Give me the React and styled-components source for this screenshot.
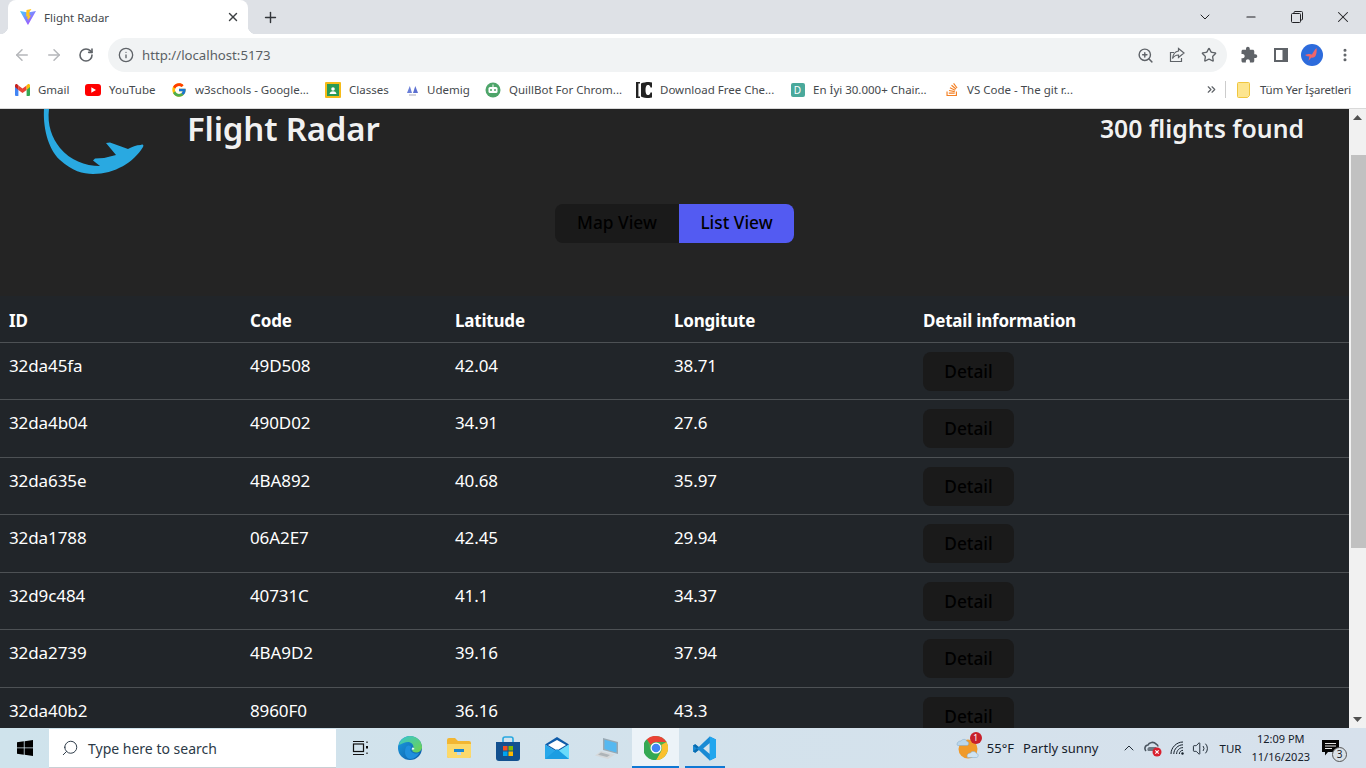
import React from "react";
import styled, { createGlobalStyle } from "styled-components";
import {
  ArrowLeft,
  ArrowRight,
  RotateCw,
  Info,
  ZoomIn,
  Star,
  X,
  Plus,
  Minus,
  ChevronDown,
  ChevronUp,
  ChevronsRight,
  EllipsisVertical,
  Search,
  Volume2,
} from "lucide-react";
import { FcGoogle } from "react-icons/fc";
import { FaStackOverflow } from "react-icons/fa";

const GlobalStyle = createGlobalStyle`
  html, body {
    margin: 0;
    padding: 0;
    height: 100%;
    overflow: hidden;
    font-family: "Noto Sans", "Open Sans", sans-serif;
  }
  * { box-sizing: border-box; }
`;

const flights = [
  ["32da45fa", "49D508", "42.04", "38.71"],
  ["32da4b04", "490D02", "34.91", "27.6"],
  ["32da635e", "4BA892", "40.68", "35.97"],
  ["32da1788", "06A2E7", "42.45", "29.94"],
  ["32d9c484", "40731C", "41.1", "34.37"],
  ["32da2739", "4BA9D2", "39.16", "37.94"],
  ["32da40b2", "8960F0", "36.16", "43.3"],
];

const Screen = styled.div`
  width: 1366px;
  height: 768px;
  display: flex;
  flex-direction: column;
  overflow: hidden;
  background: #242424;
`;

/* browser chrome */
const TabStrip = styled.div`
  height: 34px;
  flex: none;
  display: flex;
  align-items: stretch;
  background: #dee1e6;
  color: #3c4043;
`;

const Tab = styled.div`
  position: relative;
  margin-left: 8px;
  width: 240px;
  padding: 0 8px 0 12px;
  display: flex;
  align-items: center;
  gap: 8px;
  background: #fff;
  border-radius: 8px 8px 0 0;
  &::before,
  &::after {
    content: "";
    position: absolute;
    bottom: 0;
    width: 8px;
    height: 8px;
  }
  &::before {
    left: -8px;
    background: radial-gradient(circle at 0 0, transparent 8px, #fff 8.5px);
  }
  &::after {
    right: -8px;
    background: radial-gradient(circle at 100% 0, transparent 8px, #fff 8.5px);
  }
`;

const TabTitle = styled.span`
  flex: 1;
  font-size: 11.5px;
  color: #45494d;
`;

const NewTab = styled.div`
  width: 28px;
  margin-left: 8px;
  display: flex;
  align-items: center;
  justify-content: center;
  color: #33363a;
`;

const WindowControls = styled.div`
  margin-left: auto;
  display: flex;
`;

const WindowButton = styled.div`
  width: 46px;
  display: flex;
  align-items: center;
  justify-content: center;
  color: #202124;
`;

const Toolbar = styled.div`
  height: 38px;
  flex: none;
  display: flex;
  align-items: center;
  padding: 4px 5px 0 6px;
  background: #fff;
`;

const ToolButton = styled.div`
  width: 32px;
  height: 32px;
  flex: none;
  display: flex;
  align-items: center;
  justify-content: center;
  color: ${(p) => p.$color || "#5f6368"};
`;

const Omnibox = styled.div`
  flex: 1;
  height: 34px;
  margin: 0 6px;
  padding: 0 2px 0 10px;
  display: flex;
  align-items: center;
  gap: 8px;
  border-radius: 17px;
  background: #f1f3f4;
  color: #5f6368;
`;

const Url = styled.span`
  flex: 1;
  font-size: 13.2px;
  color: #5a5f64;
`;

const OmniIcons = styled.div`
  display: flex;
`;

const Avatar = styled.div`
  width: 22px;
  height: 22px;
  margin-right: 2px;
  border-radius: 50%;
  background: #2d6bdc;
  display: flex;
  align-items: center;
  justify-content: center;
`;

const BookmarkBar = styled.div`
  height: 37px;
  flex: none;
  display: flex;
  align-items: center;
  padding: 0 15px 1px 14px;
  background: #fff;
  font-size: 11.5px;
  color: #45494d;
  border-bottom: 1px solid #d9d9d9;
`;

const Bookmark = styled.div`
  display: flex;
  align-items: center;
  gap: 8px;
  margin-right: 16px;
`;

const BookmarkIcon = styled.div`
  width: ${(p) => p.$w || 16}px;
  height: 16px;
  flex: none;
  display: flex;
  align-items: center;
  justify-content: center;
`;

const BookmarkLabel = styled.span`
  width: ${(p) => p.$w}px;
  white-space: nowrap;
`;

const TealBadge = styled.div`
  width: 14px;
  height: 14px;
  border-radius: 2px;
  background: #4aa99b;
  color: #fff;
  font-size: 10px;
  line-height: 14px;
  text-align: center;
`;

const BookmarkEnd = styled.div`
  margin-left: auto;
  display: flex;
  align-items: center;
  color: #5f6368;
`;

const BarDivider = styled.div`
  width: 1px;
  height: 17px;
  margin: 0 11px 0 7px;
  background: #ccc;
`;

const OtherBookmarks = styled.span`
  margin-left: 10px;
  color: #45494d;
  letter-spacing: -0.22px;
  white-space: nowrap;
`;

/* page */
const Viewport = styled.div`
  flex: 1;
  min-height: 0;
  display: flex;
`;

const Page = styled.main`
  flex: 1;
  min-width: 0;
  background: #242424;
  color: rgba(255, 255, 255, 0.95);
`;

const Header = styled.header`
  height: 95px;
  padding: 0 45px 0 40px;
  display: flex;
  align-items: flex-start;
`;

const Logo = styled.svg`
  width: 110px;
  height: 70px;
  flex: none;
`;

const Title = styled.h1`
  margin: 0 0 0 37px;
  font-size: 33px;
  line-height: 40px;
  font-weight: 600;
  letter-spacing: -0.2px;
`;

const Count = styled.h2`
  margin: 0 0 0 auto;
  font-size: 24.8px;
  line-height: 39px;
  font-weight: 600;
`;

const Toggle = styled.div`
  display: flex;
  justify-content: center;
`;

const ToggleButton = styled.button`
  height: 39px;
  width: ${(p) => p.$w}px;
  border: 0;
  padding: 0 0 2px;
  font: inherit;
  font-size: 17.3px;
  font-weight: 500;
  color: #000;
  background: ${(p) => (p.$active ? "#535bf2" : "#1a1a1a")};
  border-radius: ${(p) => (p.$active ? "0 8px 8px 0" : "8px 0 0 8px")};
`;

const FlightTable = styled.table`
  width: 100%;
  margin-top: 53px;
  table-layout: fixed;
  border-collapse: collapse;
  background: #212529;
  color: #fff;
  font-size: 17px;
  letter-spacing: -0.1px;
`;

const Th = styled.th`
  width: ${(p) => p.$w || "auto"};
  height: 46px;
  padding: 10px 8px 6px;
  text-align: left;
  font-weight: 700;
  line-height: 27px;
  letter-spacing: -0.2px;
  border-bottom: 1px solid #4d5154;
  &:first-child {
    padding-left: 9px;
  }
`;

const Td = styled.td`
  height: 57.5px;
  padding: 9px 8px 7px;
  vertical-align: top;
  line-height: 27px;
  border-bottom: 1px solid #4d5154;
  &:first-child {
    padding-left: 9px;
  }
`;

const DetailButton = styled.button`
  display: block;
  width: 91px;
  height: 39px;
  border: 0;
  border-radius: 8px;
  padding: 0;
  font: inherit;
  font-size: 17.3px;
  font-weight: 500;
  letter-spacing: 0;
  color: #000;
  background: #1a1a1a;
`;

const Scrollbar = styled.div`
  width: 17px;
  flex: none;
  display: flex;
  flex-direction: column;
  background: #f1f1f1;
`;

const ScrollArrow = styled.div`
  height: 17px;
  flex: none;
  display: flex;
  align-items: center;
  justify-content: center;
`;

const ScrollTrack = styled.div`
  flex: 1;
  padding-top: 29px;
`;

const ScrollThumb = styled.div`
  height: 393px;
  margin-left: 2px;
  background: #c1c1c1;
`;

/* taskbar */
const Taskbar = styled.footer`
  position: relative;
  z-index: 1;
  height: 40px;
  flex: none;
  display: flex;
  align-items: stretch;
  background: linear-gradient(90deg, #cfe3ec, #d3e2ec 50%, #d7e1ec);
  color: #15202b;
`;

const StartButton = styled.div`
  width: 49px;
  flex: none;
  display: flex;
  align-items: center;
  justify-content: center;
`;

const SearchBox = styled.div`
  width: 287px;
  flex: none;
  margin-top: 1px;
  padding-left: 12px;
  display: flex;
  align-items: center;
  gap: 9px;
  background: #fff;
  border-bottom: 1px solid #c9cfd4;
  font-size: 14px;
  color: #2c3a47;
`;

const SearchGlyph = styled(Search)`
  transform: scaleX(-1);
`;

const TaskSlot = styled.div`
  position: relative;
  width: 49.2px;
  flex: none;
  display: flex;
  align-items: center;
  justify-content: center;
  &::before {
    content: ${(p) => (p.$open ? '""' : "none")};
    position: absolute;
    top: 0;
    bottom: 0;
    left: ${(p) => p.$inset || 0}px;
    right: ${(p) => p.$inset || 0}px;
    background: ${(p) => (p.$active ? "#ecf3f8" : "transparent")};
    border-bottom: 2px solid #0f78d4;
  }
  & > svg {
    position: relative;
  }
`;

const Tray = styled.div`
  margin-left: auto;
  padding-right: 21px;
  display: flex;
  align-items: center;
  font-size: 13px;
`;

const Weather = styled.div`
  margin: 0 18px 0 8px;
  display: flex;
  gap: 9px;
  white-space: nowrap;
`;

const TrayIcon = styled.div`
  width: 24px;
  flex: none;
  display: flex;
  align-items: center;
  justify-content: center;
`;

const Lang = styled.span`
  margin: 0 10px 0 7px;
  font-size: 11.5px;
`;

const Clock = styled.div`
  margin-right: 12px;
  text-align: center;
  font-size: 11px;
  line-height: 18px;
`;

const NoteBubble = styled.div`
  position: relative;
  width: 23px;
  display: flex;
`;

const NoteCount = styled.span`
  position: absolute;
  right: -2px;
  bottom: -6px;
  width: 15px;
  height: 15px;
  border-radius: 50%;
  background: #d9e0e6;
  border: 1px solid #555;
  font-size: 10px;
  line-height: 13px;
  text-align: center;
`;

const WeatherBadge = styled.span`
  position: absolute;
  top: -4px;
  right: -3px;
  width: 12px;
  height: 12px;
  border-radius: 50%;
  background: #c8202b;
  color: #fff;
  font-size: 8.5px;
  line-height: 12px;
  text-align: center;
`;

const WeatherIconWrap = styled.div`
  position: relative;
  width: 23px;
  height: 24px;
  flex: none;
`;

/* drawings */
const ViteIcon = () => (
  <svg width="16" height="16" viewBox="0 0 16 16">
    <defs>
      <linearGradient id="viteA" x1="0" y1="0" x2="1" y2="1">
        <stop offset="0" stopColor="#41d1ff" />
        <stop offset="1" stopColor="#bd34fe" />
      </linearGradient>
    </defs>
    <path d="M0 2l8 1.5L16 2 8.3 15.6a.4.4 0 0 1-.7 0z" fill="url(#viteA)" />
    <path d="M11.4 0 6.5 1l-.4 6.5 1.5-.3-.5 2.7 1.3-.4-.5 2.6 3-5.6-1.6.3.6-2.7-1.4.3z" fill="#ffc61f" />
  </svg>
);

const GmailIcon = () => (
  <svg width="15" height="12" viewBox="0 0 15 12">
    <path d="M0 2v9a1 1 0 0 0 1 1h2.4V5.2z" fill="#4285f4" />
    <path d="M15 2v9a1 1 0 0 1-1 1h-2.400V5.200z" fill="#34a853" />
    <path d="M3.400 6V1.500L7.500 4.600l4.100-3.100V6L7.500 9z" fill="#ea4335" />
    <path d="M0 3V1.500C0 .3 1.400-.4 2.400.4l1 .8V6z" fill="#c5221f" />
    <path d="M15 3V1.500c0-1.200-1.400-1.900-2.400-1.100l-1 .8V6z" fill="#fbbc04" />
  </svg>
);

const YouTubeIcon = () => (
  <svg width="16" height="12" viewBox="0 0 16 12">
    <rect width="16" height="12" rx="3" fill="#f00" />
    <path d="M6.300 3.300v5.400L11 6z" fill="#fff" />
  </svg>
);

const ClassroomIcon = () => (
  <svg width="16" height="16" viewBox="0 0 16 16">
    <rect width="16" height="16" rx="1" fill="#f6bb18" />
    <rect x="2" y="2" width="12" height="12" fill="#2a9a54" />
    <circle cx="8" cy="7" r="1.800" fill="#fff" />
    <path d="M4.500 12c.4-2 1.800-2.700 3.500-2.700s3.100.7 3.500 2.700z" fill="#fff" />
  </svg>
);

const UdemigIcon = () => (
  <svg width="13" height="13" viewBox="0 0 13 13">
    <path d="M1 10 3.800 3 6 10z" fill="#6a7fd8" />
    <path d="M7 10 9.300 3 12 10z" fill="#5b6fd0" />
    <rect x="3" y="11.500" width="7" height="1" fill="#aab" />
  </svg>
);

const QuillbotIcon = () => (
  <svg width="16" height="16" viewBox="0 0 16 16">
    <circle cx="8" cy="8" r="7.500" fill="#4ea56a" />
    <rect x="3.500" y="5" width="9" height="6" rx="1.500" fill="#fff" />
    <circle cx="6" cy="8" r="1" fill="#4ea56a" />
    <circle cx="10" cy="8" r="1" fill="#4ea56a" />
    <rect x="7.500" y="2.500" width="1" height="2.500" fill="#fff" />
  </svg>
);

const BracketIcon = () => (
  <svg width="16" height="16" viewBox="0 0 16 16">
    <path d="M0 0h4v1.500H2.400v13H4V16H0z" fill="#222" />
    <path d="M5 1.500C7 .5 10 0 13 0l3 .5v5h-1.500C14 3 12.500 2.800 11.500 3c-1.500.4-2 2.500-2 5s.5 4.600 2 5c1 .2 2.500 0 3-2.500H16v5L13 16c-3 0-6-.5-8-1.500z" fill="#222" />
  </svg>
);

const FolderBookmark = () => (
  <svg width="13" height="16" viewBox="0 0 13 16">
    <path d="M1.500.5h10a1 1 0 0 1 1 1v12l-2 2h-9a1 1 0 0 1-1-1v-13a1 1 0 0 1 1-1z" fill="#fde58f" stroke="#f0c63f" />
  </svg>
);

const RestoreIcon = () => (
  <svg width="12" height="12" viewBox="0 0 12 12" fill="none" stroke="#202124">
    <rect x=".5" y="2.500" width="9" height="9" rx="1" />
    <path d="M3 2.500V1.500a1 1 0 0 1 1-1h6.500a1 1 0 0 1 1 1V8a1 1 0 0 1-1 1h-1" />
  </svg>
);

const ShareIcon = () => (
  <svg width="16" height="16" viewBox="0 0 16 16" fill="none" stroke="#5f6368" strokeWidth="1.200">
    <path d="M5 5.500H1.500v9h11V11" />
    <path d="M9.500 1.500 15 6l-5.500 4.500V8C7 8 5 9 3.500 11.500 4 7.500 6 4.500 9.500 4z" />
  </svg>
);

const ExtensionIcon = () => (
  <svg width="18" height="18" viewBox="0 0 24 24" fill="#5f6368">
    <path d="M20.500 11H19V7c0-1.100-.9-2-2-2h-4V3.500C13 2.120 11.880 1 10.500 1S8 2.120 8 3.500V5H4c-1.100 0-1.990.9-1.990 2v3.800H3.500c1.490 0 2.700 1.210 2.700 2.700s-1.210 2.700-2.700 2.700H2V20c0 1.100.9 2 2 2h3.800v-1.500c0-1.490 1.210-2.700 2.700-2.700 1.490 0 2.700 1.210 2.700 2.700V22H17c1.100 0 2-.9 2-2v-4h1.500c1.380 0 2.500-1.120 2.500-2.500S21.880 11 20.500 11z" />
  </svg>
);

const SidePanelIcon = () => (
  <svg width="14" height="14" viewBox="0 0 14 14">
    <path d="M0 0h14v14H0z" fill="#5f6368" />
    <path d="M2 2h6.500v10H2z" fill="#fff" />
  </svg>
);

const ButterflyIcon = () => (
  <svg width="16" height="16" viewBox="0 0 16 16">
    <path d="M1 8c3-1 5-1.500 7-.5C9 5 11 2.500 12.500 1 13 4 12.500 7 11.500 9c-1 1.500-3 2-4 1.500C6 12 5 13 4.500 14 5 12 5 10.500 5.500 9.500 4 9.500 2.500 9 1 8z" fill="#f0656a" />
  </svg>
);

const WindowsLogo = () => (
  <svg width="16" height="16" viewBox="0 0 16 16" fill="#000">
    <path d="M0 2.300 6.800 1.300V7.500H0zM7.600 1.200 16 0V7.500H7.600zM0 8.300H6.800V14.700L0 13.700zM7.600 8.300H16V16L7.600 14.800z" />
  </svg>
);

const TaskViewIcon = () => (
  <svg width="17" height="16" viewBox="0 0 17 16" fill="none" stroke="#111" strokeWidth="1.200">
    <rect x="1.500" y="4" width="10" height="7.500" />
    <path d="M1 1.500h11M1 14.500h11" />
    <path d="M15 1.500v1.500M15 12.500v1.500" />
    <rect x="14" y="6" width="2" height="2.500" fill="#111" stroke="none" />
  </svg>
);

const EdgeIcon = () => (
  <svg width="24" height="24" viewBox="0 0 24 24">
    <defs>
      <linearGradient id="edgeA" x1="0" y1="0" x2="1" y2="1">
        <stop offset="0" stopColor="#37c6d0" />
        <stop offset="1" stopColor="#70d34a" />
      </linearGradient>
      <linearGradient id="edgeB" x1="0" y1="0" x2="1" y2="1">
        <stop offset="0" stopColor="#1b9de2" />
        <stop offset="1" stopColor="#0c59a4" />
      </linearGradient>
    </defs>
    <circle cx="12" cy="12" r="12" fill="url(#edgeB)" />
    <path d="M1 9C2 3.500 7 0 12 0c7 0 12 5.500 12 11 0 3.500-3 5.500-6 5.500-2 0-4-1-3.800-2.500.4-.6 1.300-1.200 1.300-3 0-2.500-2.500-5-5.500-5S4 7.500 1 9z" fill="url(#edgeA)" />
    <path d="M8 11c1-1.500 3-2 4.500-1 1 1 .5 2-.2 3-.5 2 2 4.500 5.700 4.500 1.300 0 2.800-.3 3.300-.7C20 20 16.500 23 12.500 23 8 23 5.500 17 8 11z" fill="#1f8fdc" />
    <path d="M14.500 11.500c.4 0 1.500.4 2 1.500-1.200 1-2.500.8-3 .3.300-.5.800-1.400 1-1.800z" fill="#e8f6fb" />
  </svg>
);

const FolderIcon = () => (
  <svg width="24" height="20" viewBox="0 0 24 20">
    <path d="M0 2a2 2 0 0 1 2-2h6l3 3h11a2 2 0 0 1 2 2v13a2 2 0 0 1-2 2H2a2 2 0 0 1-2-2z" fill="#f2b632" />
    <path d="M0 6h24v12a2 2 0 0 1-2 2H2a2 2 0 0 1-2-2z" fill="#fcd96a" />
    <path d="M7 11h10v3h-3v3h-4v-3H7z" fill="#1a86d0" />
    <path d="M10 14h4v3h-4z" fill="#fff" opacity=".7" />
  </svg>
);

const StoreIcon = () => (
  <svg width="24" height="25" viewBox="0 0 24 25">
    <path d="M7 6V3a2 2 0 0 1 2-2h6a2 2 0 0 1 2 2v3" fill="none" stroke="#28a8e0" strokeWidth="1.600" />
    <path d="M0 6h24v16a3 3 0 0 1-3 3H3a3 3 0 0 1-3-3z" fill="#12508f" />
    <rect x="7" y="10" width="4.500" height="4.500" fill="#f25022" />
    <rect x="12.500" y="10" width="4.500" height="4.500" fill="#7fba00" />
    <rect x="7" y="15.500" width="4.500" height="4.500" fill="#00a4ef" />
    <rect x="12.500" y="15.500" width="4.500" height="4.500" fill="#ffb900" />
  </svg>
);

const MailIcon = () => (
  <svg width="24" height="22" viewBox="0 0 24 22">
    <path d="M0 7.500 12 0l12 7.500L12 15z" fill="#0f5ba8" />
    <path d="M3 8 12 3l9 5-9 5.500z" fill="#fff" />
    <path d="M0 7.500V22h24z" fill="#28a8ea" />
    <path d="M24 7.500V22H0z" fill="#50d9ff" opacity=".8" />
    <path d="M0 22 12 12l12 10z" fill="#1b9de2" />
  </svg>
);

const LaptopIcon = () => (
  <svg width="24" height="22" viewBox="0 0 24 22">
    <path d="M8 1 23 5v12L8 13z" fill="#9aa9b3" />
    <path d="M9.500 2.700 21.500 6v9.500L9.500 12z" fill="#55b8f0" />
    <path d="M6 14 20 17.500 13 22 0 18.500z" fill="#d5d8da" />
    <path d="M6 15.500 15 18 12 20 3 17.700z" fill="#aeb4b8" />
  </svg>
);

const ChromeIcon = () => (
  <svg width="24" height="24" viewBox="0 0 48 48">
    <circle cx="24" cy="24" r="24" fill="#4caf50" />
    <path d="M24 0a24 24 0 0 1 20.800 12H24a12 12 0 0 0-10.400 6L5.500 6.500A24 24 0 0 1 24 0z" fill="#ea4335" />
    <path d="M44.800 12A24 24 0 0 1 24 48l10.400-18A12 12 0 0 0 34.400 18z" fill="#fbc02d" />
    <path d="M5.500 6.500A24 24 0 0 0 24 48l10.400-18a12 12 0 0 1-20.800 0z" fill="#34a853" />
    <circle cx="24" cy="24" r="11" fill="#fff" />
    <circle cx="24" cy="24" r="8.600" fill="#4285f4" />
  </svg>
);

const VsCodeIcon = () => (
  <svg width="25" height="25" viewBox="0 0 100 100">
    <path d="M71 2 96 14v72L71 98 27 56l-14 11-9-5V38l9-5 14 11zM71 28 45 50l26 22z" fill="#1a8ad4" />
    <path d="M71 2 96 14v72L71 98z" fill="#22a6ee" />
    <path d="M4 38l9-5 14 11-8 6zM4 62l9 5 14-11-8-6z" fill="#0a6cb0" />
  </svg>
);

const WeatherIcon = () => (
  <svg width="23" height="24" viewBox="0 0 23 24">
    <circle cx="12" cy="13" r="9.500" fill="#f09a2a" />
    <path d="M1 8.500c0-2.500 2-3.500 4-3.500 1-2 5-2.500 6 .5 2 0 2.500 3.500 0 4H2C1.500 9.500 1 9 1 8.500z" fill="#b9d6ec" stroke="#7fa6c6" strokeWidth=".5" />
    <path d="M11 20c0-2 2-3 3.500-3 1-2 5-2 6 .5 2 0 2.500 3.500 0 4H12c-.5 0-1-.7-1-1.500z" fill="#cfe3f2" stroke="#7fa6c6" strokeWidth=".5" />
  </svg>
);

const CloudOffIcon = () => (
  <svg width="18" height="18" viewBox="0 0 18 18">
    <path d="M2 12C0 10 1 6 4 6c1-3 6-3.500 8-1 1 .5 2 1.500 2 2.500" fill="none" stroke="#4a5560" strokeWidth="1.600" />
    <path d="M4 12c-1.500-2 0-4 2-4l6 0c1 0 1 4 0 4z" fill="#6d7883" />
    <circle cx="13" cy="13" r="4.500" fill="#d9202e" />
    <path d="M11.300 11.300l3.400 3.400M14.700 11.300l-3.400 3.400" stroke="#fff" strokeWidth="1.100" />
  </svg>
);

const WifiIcon = () => (
  <svg width="14" height="14" viewBox="0 0 14 14" fill="none" stroke="#15202b" strokeWidth="1">
    <path d="M1 13C1 6.500 6.500 1 13 1" />
    <path d="M3.800 13c0-5 4.200-9.200 9.200-9.200" />
    <path d="M6.600 13c0-3.500 2.900-6.400 6.400-6.400" />
    <path d="M9.300 13c0-2 1.700-3.700 3.700-3.700" />
    <circle cx="12.500" cy="12.500" r="1.200" fill="#15202b" stroke="none" />
  </svg>
);

const NoteIcon = () => (
  <svg width="17" height="16" viewBox="0 0 17 16">
    <path d="M0 0h17v12H6l-3 3.500V12H0z" fill="#050505" />
    <path d="M3 3.500h11M3 6h11M3 8.500h7" stroke="#fff" strokeWidth=".9" />
  </svg>
);

const bookmarks = [
  { label: "Gmail", w: 31, icon: <GmailIcon /> },
  { label: "YouTube", w: 46, icon: <YouTubeIcon /> },
  { label: "w3schools - Google...", w: 114, icon: <FcGoogle size={16} /> },
  { label: "Classes", w: 40, icon: <ClassroomIcon /> },
  { label: "Udemig", w: 42, iconW: 14, icon: <UdemigIcon /> },
  { label: "QuillBot For Chrom...", w: 111, icon: <QuillbotIcon /> },
  { label: "Download Free Che...", w: 114, icon: <BracketIcon /> },
  { label: "En İyi 30.000+ Chair...", w: 116, iconW: 15, icon: <TealBadge>D</TealBadge> },
  { label: "VS Code - The git r...", w: 110, iconW: 14, icon: <FaStackOverflow size={15} color="#f48024" /> },
];

function App() {
  return (
    <Screen>
      <GlobalStyle />
      <TabStrip>
        <Tab>
          <ViteIcon />
          <TabTitle>Flight Radar</TabTitle>
          <X size={14} strokeWidth={2.4} />
        </Tab>
        <NewTab>
          <Plus size={17} strokeWidth={2} />
        </NewTab>
        <WindowControls>
          <WindowButton>
            <ChevronDown size={16} strokeWidth={1.5} />
          </WindowButton>
          <WindowButton>
            <Minus size={14} strokeWidth={1.8} />
          </WindowButton>
          <WindowButton>
            <RestoreIcon />
          </WindowButton>
          <WindowButton>
            <X size={18} strokeWidth={1.4} />
          </WindowButton>
        </WindowControls>
      </TabStrip>

      <Toolbar>
        <ToolButton $color="#b5b7ba">
          <ArrowLeft size={18} />
        </ToolButton>
        <ToolButton $color="#b5b7ba">
          <ArrowRight size={18} />
        </ToolButton>
        <ToolButton>
          <RotateCw size={16} strokeWidth={2.4} />
        </ToolButton>
        <Omnibox>
          <Info size={16} />
          <Url>http://localhost:5173</Url>
          <OmniIcons>
            <ToolButton>
              <ZoomIn size={17} />
            </ToolButton>
            <ToolButton>
              <ShareIcon />
            </ToolButton>
            <ToolButton>
              <Star size={16} strokeWidth={2} />
            </ToolButton>
          </OmniIcons>
        </Omnibox>
        <ToolButton>
          <ExtensionIcon />
        </ToolButton>
        <ToolButton>
          <SidePanelIcon />
        </ToolButton>
        <ToolButton>
          <Avatar>
            <ButterflyIcon />
          </Avatar>
        </ToolButton>
        <ToolButton>
          <EllipsisVertical size={16} strokeWidth={2.6} />
        </ToolButton>
      </Toolbar>

      <BookmarkBar>
        {bookmarks.map((b) => (
          <Bookmark key={b.label}>
            <BookmarkIcon $w={b.iconW}>{b.icon}</BookmarkIcon>
            <BookmarkLabel $w={b.w}>{b.label}</BookmarkLabel>
          </Bookmark>
        ))}
        <BookmarkEnd>
          <ChevronsRight size={13} strokeWidth={2.2} />
          <BarDivider />
          <FolderBookmark />
          <OtherBookmarks>Tüm Yer İşaretleri</OtherBookmarks>
        </BookmarkEnd>
      </BookmarkBar>

      <Viewport>
        <Page>
          <Header>
            <Logo viewBox="40 109 110 70">
              <path
                d="M44 109C43 125 47 148 60 160 72 171 83 174 93 174 115 174 134 162 143 147 144 145 143 144 141 145 136 145 132 147 128 149L110 142.500 106 143 116 155 104 158 95 158.500 93 160.500 100 166C85 166 70 160 60 148 52 138 47 125 49 109Z"
                fill="#29a9e1"
              />
            </Logo>
            <Title>Flight Radar</Title>
            <Count>300 flights found</Count>
          </Header>
          <Toggle>
            <ToggleButton $w={124}>Map View</ToggleButton>
            <ToggleButton $w={115} $active>
              List View
            </ToggleButton>
          </Toggle>
          <FlightTable>
            <thead>
              <tr>
                <Th $w="242px">ID</Th>
                <Th $w="205px">Code</Th>
                <Th $w="219px">Latitude</Th>
                <Th $w="249px">Longitute</Th>
                <Th>Detail information</Th>
              </tr>
            </thead>
            <tbody>
              {flights.map((f) => (
                <tr key={f[0]}>
                  {f.map((v) => (
                    <Td key={v}>{v}</Td>
                  ))}
                  <Td>
                    <DetailButton>Detail</DetailButton>
                  </Td>
                </tr>
              ))}
            </tbody>
          </FlightTable>
        </Page>
        <Scrollbar>
          <ScrollArrow>
            <svg width="9" height="5" viewBox="0 0 9 5">
              <path d="M0 5 4.500 0 9 5z" fill="#505050" />
            </svg>
          </ScrollArrow>
          <ScrollTrack>
            <ScrollThumb />
          </ScrollTrack>
          <ScrollArrow>
            <svg width="9" height="5" viewBox="0 0 9 5">
              <path d="M0 0 4.500 5 9 0z" fill="#505050" />
            </svg>
          </ScrollArrow>
        </Scrollbar>
      </Viewport>

      <Taskbar>
        <StartButton>
          <WindowsLogo />
        </StartButton>
        <SearchBox>
          <SearchGlyph size={18} strokeWidth={1.3} />
          <span>Type here to search</span>
        </SearchBox>
        <TaskSlot>
          <TaskViewIcon />
        </TaskSlot>
        <TaskSlot>
          <EdgeIcon />
        </TaskSlot>
        <TaskSlot>
          <FolderIcon />
        </TaskSlot>
        <TaskSlot>
          <StoreIcon />
        </TaskSlot>
        <TaskSlot>
          <MailIcon />
        </TaskSlot>
        <TaskSlot>
          <LaptopIcon />
        </TaskSlot>
        <TaskSlot $open $active $inset={1}>
          <ChromeIcon />
        </TaskSlot>
        <TaskSlot $open $inset={5}>
          <VsCodeIcon />
        </TaskSlot>
        <Tray>
          <WeatherIconWrap>
            <WeatherIcon />
            <WeatherBadge>1</WeatherBadge>
          </WeatherIconWrap>
          <Weather>
            <span>55°F</span>
            <span>Partly sunny</span>
          </Weather>
          <TrayIcon>
            <ChevronUp size={16} strokeWidth={1.4} />
          </TrayIcon>
          <TrayIcon>
            <CloudOffIcon />
          </TrayIcon>
          <TrayIcon>
            <WifiIcon />
          </TrayIcon>
          <TrayIcon>
            <Volume2 size={17} strokeWidth={1.3} />
          </TrayIcon>
          <Lang>TUR</Lang>
          <Clock>
            12:09 PM
            <br />
            11/16/2023
          </Clock>
          <NoteBubble>
            <NoteIcon />
            <NoteCount>3</NoteCount>
          </NoteBubble>
        </Tray>
      </Taskbar>
    </Screen>
  );
}

export default App;
